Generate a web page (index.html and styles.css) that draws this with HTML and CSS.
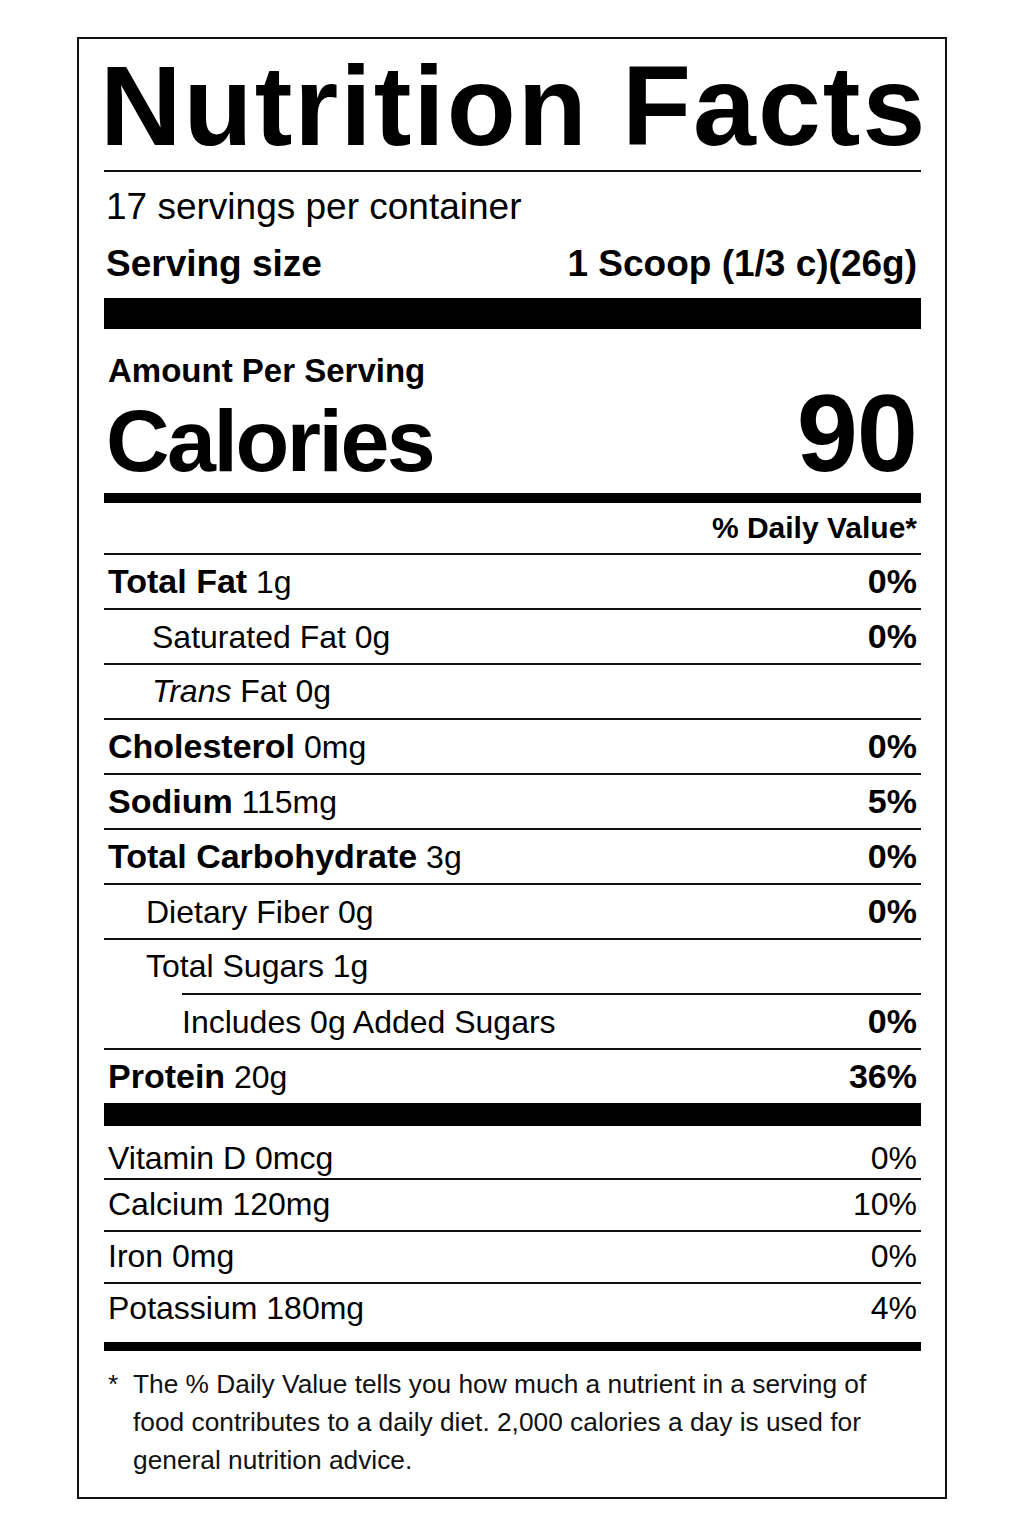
FILE: index.html
```html
<!DOCTYPE html>
<html lang="en">
<head>
<meta charset="utf-8">
<title>Nutrition Facts</title>
<link rel="stylesheet" href="styles.css">
</head>
<body>
<div class="label">
  <h1 class="title">Nutrition Facts</h1>
  <div class="serving">
    <div class="servings">17 servings per container</div>
    <div class="size"><span>Serving size</span><span>1 Scoop (1/3 c)(26g)</span></div>
  </div>
  <div class="bar bar-xl"></div>
  <div class="amount">Amount Per Serving</div>
  <div class="calories"><span class="cal-label">Calories</span><span class="cal-value">90</span></div>
  <div class="bar bar-md"></div>
  <div class="dv-head">% Daily Value*</div>

  <div class="row"><span><b>Total Fat</b> 1g</span><b>0%</b></div>
  <div class="row sub-fat"><span>Saturated Fat 0g</span><b>0%</b></div>
  <div class="row sub-fat"><span><i>Trans</i> Fat 0g</span></div>
  <div class="row"><span><b>Cholesterol</b> 0mg</span><b>0%</b></div>
  <div class="row"><span><b>Sodium</b> 115mg</span><b>5%</b></div>
  <div class="row"><span><b>Total Carbohydrate</b> 3g</span><b>0%</b></div>
  <div class="row sub-carb"><span>Dietary Fiber 0g</span><b>0%</b></div>
  <div class="row sub-carb"><span>Total Sugars 1g</span></div>
  <div class="row sub-added"><span>Includes 0g Added Sugars</span><b>0%</b></div>
  <div class="row"><span><b>Protein</b> 20g</span><b>36%</b></div>
  <div class="bar bar-lg"></div>

  <div class="vit vit-first"><span>Vitamin D 0mcg</span><span>0%</span></div>
  <div class="vit"><span>Calcium 120mg</span><span>10%</span></div>
  <div class="vit"><span>Iron 0mg</span><span>0%</span></div>
  <div class="vit vit-last"><span>Potassium 180mg</span><span>4%</span></div>
  <div class="bar bar-sm"></div>

  <div class="footnote">
    <span class="star">*</span>
    <p class="note">The % Daily Value tells you how much a nutrient in a serving of<br>food contributes to a daily diet. 2,000 calories a day is used for<br>general nutrition advice.</p>
  </div>
</div>
</body>
</html>
```

FILE: styles.css
```css
html, body {
  margin: 0;
  padding: 0;
  background: #fff;
}

body {
  font-family: "Liberation Sans", Arial, Helvetica, sans-serif;
  color: #000;
}

.label {
  box-sizing: border-box;
  width: 870px;
  height: 1462px;
  margin: 37px 0 0 77px;
  border: 2px solid #111;
  padding: 11px 24px 0 25px;
  background: #fff;
}

.title {
  margin: 0;
  font-size: 113px;
  line-height: 113px;
  font-weight: 700;
  letter-spacing: 2px;
  text-indent: -4px;
  white-space: nowrap;
  padding-bottom: 7px;
  border-bottom: 2px solid #111;
}

.serving {
  padding-top: 13px;
}

.servings {
  font-size: 37px;
  line-height: 44px;
  padding-left: 2px;
}

.size {
  display: flex;
  justify-content: space-between;
  margin-top: 13px;
  font-size: 37px;
  line-height: 44px;
  font-weight: 700;
  padding: 0 4px 0 2px;
}

.bar {
  background: #000;
}

.bar-xl {
  margin-top: 12px;
  height: 31px;
}

.bar-md {
  height: 10px;
}

.bar-lg {
  height: 23px;
}

.bar-sm {
  height: 9px;
}

.amount {
  padding: 22px 0 0 4px;
  font-size: 33px;
  line-height: 40px;
  font-weight: 700;
}

.calories {
  display: flex;
  justify-content: space-between;
  align-items: baseline;
  margin-bottom: 3px;
  padding: 0 4px 0 2px;
  font-weight: 700;
}

.cal-label {
  font-size: 88px;
  line-height: 99px;
  letter-spacing: -2.5px;
}

.cal-value {
  font-size: 110px;
  line-height: 80px;
  letter-spacing: -1px;
}

.dv-head {
  font-size: 30px;
  line-height: 50px;
  font-weight: 700;
  text-align: right;
  padding-right: 4px;
}

.row {
  display: flex;
  justify-content: space-between;
  align-items: baseline;
  height: 53px;
  overflow: visible;
  border-top: 2px solid #111;
  font-size: 32px;
  line-height: 53px;
  padding: 0 4px;
}

.row b {
  font-weight: 700;
  font-size: 34px;
  line-height: 34px;
}

.row > b {
  line-height: 53px;
}

.sub-fat {
  padding-left: 48px;
}

.sub-carb {
  padding-left: 42px;
}

.sub-added {
  margin-left: 78px;
  padding-left: 0;
}

.vit {
  display: flex;
  justify-content: space-between;
  border-top: 2px solid #111;
  font-size: 32px;
  line-height: 33px;
  padding: 8px 4px 9px;
}

.vit-first {
  border-top: 0;
  padding-top: 16px;
  padding-bottom: 3px;
}

.vit-last {
  padding-bottom: 17px;
}

.footnote {
  display: flex;
  padding: 14px 0 0 4px;
  font-size: 26.3px;
  line-height: 38px;
  color: #111;
}

.star {
  flex: 0 0 25px;
}

.note {
  margin: 0;
  white-space: nowrap;
}
```
